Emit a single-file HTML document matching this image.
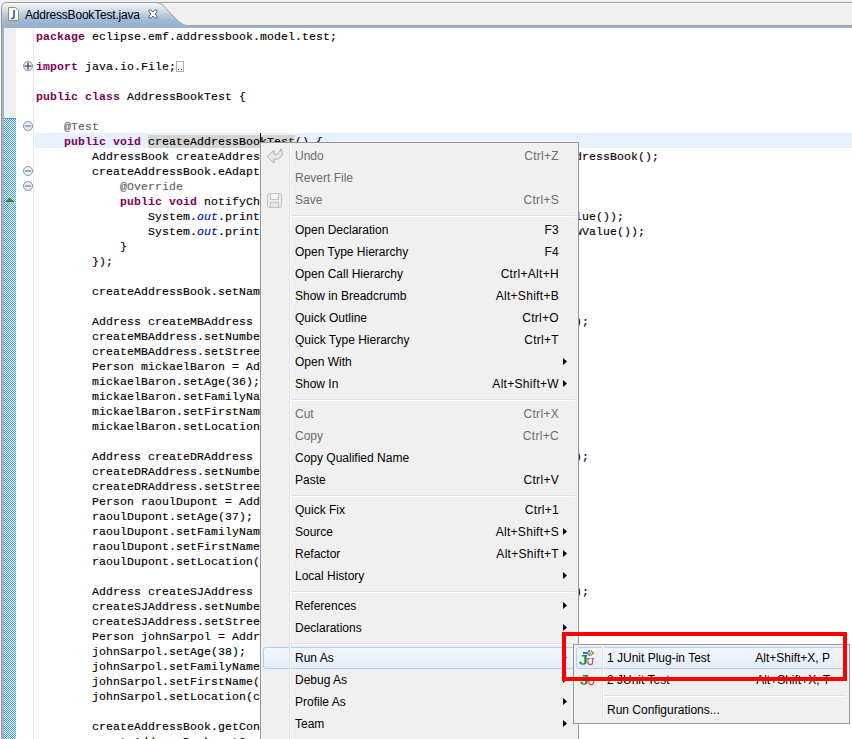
<!DOCTYPE html>
<html><head><meta charset="utf-8">
<style>
*{margin:0;padding:0;box-sizing:border-box}
html,body{width:852px;height:739px;overflow:hidden;background:#fff}
body{position:relative;font-family:"Liberation Sans",sans-serif}
#tabs{position:absolute;left:0;top:0;width:852px;height:28px;background:#f0f0f0}
#tabs svg{position:absolute;left:0;top:0}
#title{position:absolute;left:25px;top:6px;font-size:12px;line-height:18px;letter-spacing:-0.2px;color:#000}
#editor{position:absolute;left:0;top:28px;width:852px;height:711px;background:#fff}
#lborder{position:absolute;left:1px;top:0;width:1px;height:711px;background:#9a9a9a}
#lblue{position:absolute;left:2px;top:0;width:2px;height:711px;background:#99b4d1}
#ruler{position:absolute;left:4px;top:0;width:12px;height:711px;background:#f0f0f0}
#gline{position:absolute;left:33px;top:0;width:1px;height:711px;background:#e8e8e8}
#curline{position:absolute;left:35px;top:105px;width:817px;height:15px;background:#e8f2fe}
.ln{position:absolute;left:36px;height:15px;line-height:15px;padding-top:1px;white-space:pre;font-family:"Liberation Mono",monospace;font-size:11.5px;letter-spacing:0.1px;color:#000;-webkit-text-stroke:0.15px #000}
.ln .k{-webkit-text-stroke:0}
.ln .an{-webkit-text-stroke:0.15px #646464}
.ln .o{-webkit-text-stroke:0.15px #0000c0}
.k{font-weight:bold;color:#7f0055}
.an{color:#646464}
.o{font-style:italic;color:#0000c0}
.sel{background:#d4d4d4}
#menu{position:absolute;left:260px;top:142px;width:319px;height:620px;background:#f0f0f0;border:1px solid #979797;padding:2px 2px 2px 2px}
#menu .col{position:absolute;z-index:1;left:28px;top:2px;width:2px;height:100%;border-left:1px solid #e2e3e3;border-right:1px solid #fff}
.it{position:relative;height:22px;line-height:22px;font-size:12px;color:#000;white-space:nowrap}
.it .lb{position:absolute;left:32px;top:0}
.it .sc{position:absolute;right:17px;top:0;letter-spacing:0.3px}
.it .ar{position:absolute;left:300px;top:7px}
.dis{color:#6d6d6d}
.sep{position:relative;height:8px}
.sep:after{content:"";position:absolute;left:28px;right:1px;top:4px;height:0;border-top:1px solid #e0e0e0;border-bottom:1px solid #fff}
.hlbox{position:absolute;left:0;right:0;top:0;bottom:0;border:1px solid #aecff7;border-radius:3px;background:linear-gradient(#f2f6fc,#e4edf9)}
.it.hl .lb,.it.hl .sc,.it.hl .ar{z-index:1}
#sub{position:absolute;z-index:5;left:573px;top:644px;width:277px;height:80px;background:#f0f0f0;border:1px solid #979797;padding:2px}
#sub .col{position:absolute;z-index:1;left:28px;top:2px;width:2px;height:74px;border-left:1px solid #e2e3e3;border-right:1px solid #fff}
#sub .it .lb{left:31px}
#sub .it .sc{right:17px;letter-spacing:0}
#red{position:absolute;z-index:10;left:562px;top:632px;width:285px;height:49px;border:4px solid #ff0000}
.icon{position:absolute}
</style></head><body>
<div id="tabs">
<svg width="852" height="28" viewBox="0 0 852 28">
<defs><linearGradient id="tg" x1="0" y1="0" x2="0" y2="1">
<stop offset="0" stop-color="#f4f7fb"/><stop offset="0.15" stop-color="#e3ebf4"/><stop offset="0.45" stop-color="#bccde2"/><stop offset="0.7" stop-color="#9fb8d6"/><stop offset="1" stop-color="#95b0d0"/></linearGradient></defs>
<line x1="7" y1="2.5" x2="852" y2="2.5" stroke="#a0a0a0" stroke-width="1"/>
<line x1="7" y1="3.5" x2="852" y2="3.5" stroke="#fafafa" stroke-width="1"/>
<line x1="189" y1="25.5" x2="852" y2="25.5" stroke="#a0a0a0" stroke-width="1"/>
<rect x="2" y="26" width="850" height="2" fill="#97b2d2"/>
<path d="M2,28 L2,8 Q2,3 7,3 L155,3 C160,3 163,5 166,8.5 L176,19 C180,23.5 184,26 189,26 L852,26 L852,28 Z" fill="url(#tg)"/>
<path d="M1.5,28 L1.5,8 Q1.5,2.5 7,2.5 L155,2.5 C160,2.5 163,5 166,8.5 L176,19 C180,23.5 184,25.5 189,25.5" fill="none" stroke="#9a9a9a" stroke-width="1"/>
<line x1="7" y1="3.5" x2="155" y2="3.5" stroke="#f8fafc" stroke-width="1"/>
<!-- J file icon -->
<path d="M8.5,7.5 L15.5,7.5 L18.5,10.5 L18.5,20.5 L8.5,20.5 Z" fill="#fdfdfd" stroke="#a88a3c" stroke-width="1"/>
<path d="M14,10 L14,16.5 Q14,18.5 12,18.5 L11,18.5" fill="none" stroke="#2c5aa0" stroke-width="1.6"/>
<!-- close x -->
<path d="M149,10 L151,10 L153,12 L155,10 L157,10 L157,12 L155,14 L157,16 L157,18 L155,18 L153,16 L151,18 L149,18 L149,16 L151,14 L149,12 Z" fill="#fff" stroke="#6a6a6a" stroke-width="1"/>
</svg>
<div id="title">AddressBookTest.java</div>
</div>
<div id="editor">
<div id="lborder"></div><div id="lblue"></div><div id="ruler"></div>
<svg style="position:absolute;left:4px;top:90px" width="12" height="621">
<defs><pattern id="chk" width="2" height="2" patternUnits="userSpaceOnUse"><rect width="2" height="2" fill="#fff"/><rect x="0" y="0" width="1" height="1" fill="#3399ff"/><rect x="1" y="1" width="1" height="1" fill="#3399ff"/></pattern></defs>
<rect x="0" y="0" width="12" height="621" fill="url(#chk)" shape-rendering="crispEdges"/>
<rect x="0" y="0" width="12" height="1" fill="#3399ff"/>
<path d="M1,84 L6,79 L11,84 Z" fill="#fff" transform="translate(0,1)"/>
<path d="M2,84 L6,80 L10,84 Z" fill="#2e9a3a" stroke="#0f7a1f" stroke-width="0.8"/>
</svg>
<div id="gline"></div>
<div id="curline"></div>
</div>
<!-- fold icons -->
<svg style="position:absolute;left:22px;top:58px" width="12" height="140">
<g fill="#e4eef6" stroke="#8a97a6" stroke-width="1">
<circle cx="6" cy="8" r="4.5"/>
<circle cx="6" cy="68" r="4.5"/>
<circle cx="6" cy="113" r="4.5"/>
<circle cx="6" cy="128" r="4.5"/>
</g>
<g stroke="#2a3440" stroke-width="1.1">
<line x1="2.5" y1="8" x2="9.5" y2="8"/><line x1="6" y1="4.5" x2="6" y2="11.5"/>
</g>
<g stroke="#7c8794" stroke-width="1.3">
<line x1="3" y1="68" x2="9" y2="68"/>
<line x1="3" y1="113" x2="9" y2="113"/>
<line x1="3" y1="128" x2="9" y2="128"/>
</g>
</svg>
<div style="position:absolute;left:0;top:0">
<div class=ln style="top:28px"><b class=k>package</b> eclipse.emf.addressbook.model.test;</div>
<div class=ln style="top:43px"></div>
<div class=ln style="top:58px"><b class=k>import</b> java.io.File;</div>
<div class=ln style="top:73px"></div>
<div class=ln style="top:88px"><b class=k>public</b> <b class=k>class</b> AddressBookTest {</div>
<div class=ln style="top:103px"></div>
<div class=ln style="top:118px">    <span class=an>@Test</span></div>
<div class=ln style="top:133px">    <b class=k>public</b> <b class=k>void</b> <span class=sel>createAddressBookTest</span>() {</div>
<div class=ln style="top:148px">        AddressBook createAddressBook = AddressbookFactory.eINSTANCE.createAddressBook();</div>
<div class=ln style="top:163px">        createAddressBook.eAdapters().add(new AdapterImpl() {</div>
<div class=ln style="top:178px">            <span class=an>@Override</span></div>
<div class=ln style="top:193px">            <b class=k>public</b> <b class=k>void</b> notifyChanged(Notification notification) {</div>
<div class=ln style="top:208px">                System.<i class=o>out</i>.println("Old value(set): " + notification.getOldValue());</div>
<div class=ln style="top:223px">                System.<i class=o>out</i>.println("New value(before): " + notification.getNewValue());</div>
<div class=ln style="top:238px">            }</div>
<div class=ln style="top:253px">        });</div>
<div class=ln style="top:268px"></div>
<div class=ln style="top:283px">        createAddressBook.setName("Mon Carnet");</div>
<div class=ln style="top:298px"></div>
<div class=ln style="top:313px">        Address createMBAddress = AddressbookFactory.eINSTANCE.createAddress();</div>
<div class=ln style="top:328px">        createMBAddress.setNumber(10);</div>
<div class=ln style="top:343px">        createMBAddress.setStreet("Rue de Paris");</div>
<div class=ln style="top:358px">        Person mickaelBaron = AddressbookFactory.eINSTANCE.createPerson();</div>
<div class=ln style="top:373px">        mickaelBaron.setAge(36);</div>
<div class=ln style="top:388px">        mickaelBaron.setFamilyName("Baron");</div>
<div class=ln style="top:403px">        mickaelBaron.setFirstName("Mickael");</div>
<div class=ln style="top:418px">        mickaelBaron.setLocation(createMBAddress);</div>
<div class=ln style="top:433px"></div>
<div class=ln style="top:448px">        Address createDRAddress = AddressbookFactory.eINSTANCE.createAddress();</div>
<div class=ln style="top:463px">        createDRAddress.setNumber(20);</div>
<div class=ln style="top:478px">        createDRAddress.setStreet("Rue de Lyon");</div>
<div class=ln style="top:493px">        Person raoulDupont = AddressbookFactory.eINSTANCE.createPerson();</div>
<div class=ln style="top:508px">        raoulDupont.setAge(37);</div>
<div class=ln style="top:523px">        raoulDupont.setFamilyName("Dupont");</div>
<div class=ln style="top:538px">        raoulDupont.setFirstName("Raoul");</div>
<div class=ln style="top:553px">        raoulDupont.setLocation(createDRAddress);</div>
<div class=ln style="top:568px"></div>
<div class=ln style="top:583px">        Address createSJAddress = AddressbookFactory.eINSTANCE.createAddress();</div>
<div class=ln style="top:598px">        createSJAddress.setNumber(30);</div>
<div class=ln style="top:613px">        createSJAddress.setStreet("Rue de Nice");</div>
<div class=ln style="top:628px">        Person johnSarpol = AddressbookFactory.eINSTANCE.createPerson();</div>
<div class=ln style="top:643px">        johnSarpol.setAge(38);</div>
<div class=ln style="top:658px">        johnSarpol.setFamilyName("Sarpol");</div>
<div class=ln style="top:673px">        johnSarpol.setFirstName("John");</div>
<div class=ln style="top:688px">        johnSarpol.setLocation(createSJAddress);</div>
<div class=ln style="top:703px"></div>
<div class=ln style="top:718px">        createAddressBook.getContents().add(mickaelBaron);</div>
<div class=ln style="top:733px">        createAddressBook.getContents().add(raoulDupont);</div>
</div>
<!-- fold box after import -->
<div style="position:absolute;left:176px;top:61px;width:8px;height:11px;border:1px solid #b0b0b0;background:#fff"><div style="position:absolute;left:1px;top:7px;width:1px;height:1px;background:#555"></div><div style="position:absolute;left:4px;top:7px;width:1px;height:1px;background:#555"></div></div>
<!-- caret -->
<div style="position:absolute;left:260px;top:133px;width:1px;height:15px;background:#000"></div>

<div id="menu"><div class="col"></div>
<svg style="position:absolute;left:5px;top:5px" width="18" height="62">
<path d="M1,8.5 L8,2.5 L8,6.5 Q12,6.5 13.5,4 L15,1 Q17.5,5 15.5,8.5 Q13,11.5 8,11.5 L8,15 Z" fill="#e6e6e6" stroke="#b4b4b4" stroke-width="1" stroke-linejoin="round"/>
<rect x="1.5" y="45.5" width="14" height="14" rx="1.5" fill="#ececec" stroke="#c4c4c4"/>
<rect x="4.5" y="45.5" width="8" height="6" fill="#f4f4f4" stroke="#c4c4c4"/>
<rect x="4.5" y="54.5" width="8" height="5" fill="#e8e8e8" stroke="#c4c4c4"/>
</svg>
<div class="it dis"><span class=lb>Undo</span><span class=sc>Ctrl+Z</span></div>
<div class="it dis"><span class=lb>Revert File</span></div>
<div class="it dis"><span class=lb>Save</span><span class=sc>Ctrl+S</span></div>
<div class=sep></div>
<div class="it"><span class=lb>Open Declaration</span><span class=sc>F3</span></div>
<div class="it"><span class=lb>Open Type Hierarchy</span><span class=sc>F4</span></div>
<div class="it"><span class=lb>Open Call Hierarchy</span><span class=sc>Ctrl+Alt+H</span></div>
<div class="it"><span class=lb>Show in Breadcrumb</span><span class=sc>Alt+Shift+B</span></div>
<div class="it"><span class=lb>Quick Outline</span><span class=sc>Ctrl+O</span></div>
<div class="it"><span class=lb>Quick Type Hierarchy</span><span class=sc>Ctrl+T</span></div>
<div class="it"><span class=lb>Open With</span><svg class=ar width="5" height="8"><path d="M0,0 L4,3.5 L0,7 Z" fill="#000"/></svg></div>
<div class="it"><span class=lb>Show In</span><span class=sc>Alt+Shift+W</span><svg class=ar width="5" height="8"><path d="M0,0 L4,3.5 L0,7 Z" fill="#000"/></svg></div>
<div class=sep></div>
<div class="it dis"><span class=lb>Cut</span><span class=sc>Ctrl+X</span></div>
<div class="it dis"><span class=lb>Copy</span><span class=sc>Ctrl+C</span></div>
<div class="it"><span class=lb>Copy Qualified Name</span></div>
<div class="it"><span class=lb>Paste</span><span class=sc>Ctrl+V</span></div>
<div class=sep></div>
<div class="it"><span class=lb>Quick Fix</span><span class=sc>Ctrl+1</span></div>
<div class="it"><span class=lb>Source</span><span class=sc>Alt+Shift+S</span><svg class=ar width="5" height="8"><path d="M0,0 L4,3.5 L0,7 Z" fill="#000"/></svg></div>
<div class="it"><span class=lb>Refactor</span><span class=sc>Alt+Shift+T</span><svg class=ar width="5" height="8"><path d="M0,0 L4,3.5 L0,7 Z" fill="#000"/></svg></div>
<div class="it"><span class=lb>Local History</span><svg class=ar width="5" height="8"><path d="M0,0 L4,3.5 L0,7 Z" fill="#000"/></svg></div>
<div class=sep></div>
<div class="it"><span class=lb>References</span><svg class=ar width="5" height="8"><path d="M0,0 L4,3.5 L0,7 Z" fill="#000"/></svg></div>
<div class="it"><span class=lb>Declarations</span><svg class=ar width="5" height="8"><path d="M0,0 L4,3.5 L0,7 Z" fill="#000"/></svg></div>
<div class=sep></div>
<div class="it hl"><div class=hlbox></div><span class=lb>Run As</span><svg class=ar width="5" height="8"><path d="M0,0 L4,3.5 L0,7 Z" fill="#000"/></svg></div>
<div class="it"><span class=lb>Debug As</span><svg class=ar width="5" height="8"><path d="M0,0 L4,3.5 L0,7 Z" fill="#000"/></svg></div>
<div class="it"><span class=lb>Profile As</span><svg class=ar width="5" height="8"><path d="M0,0 L4,3.5 L0,7 Z" fill="#000"/></svg></div>
<div class="it"><span class=lb>Team</span><svg class=ar width="5" height="8"><path d="M0,0 L4,3.5 L0,7 Z" fill="#000"/></svg></div>
<div class="it"><span class=lb>Compare With</span><svg class=ar width="5" height="8"><path d="M0,0 L4,3.5 L0,7 Z" fill="#000"/></svg></div>
</div>

<div id="sub"><div class="col"></div>
<div class="it hl"><div class="hlbox"></div>
<svg style="position:absolute;left:3px;top:3px;z-index:1" width="18" height="18">
<g transform="translate(0,5)">
<path d="M2.8,0 L8.2,0 L8.2,1.4 L7.6,1.4 L7.6,7 Q7.6,9.8 4.2,9.8 Q0.6,9.8 0.4,7.6 Q0.4,6.6 1.5,6.6 Q2.5,6.6 2.5,7.6 Q2.6,8.6 4,8.6 Q5.3,8.6 5.3,7 L5.3,1.4 L2.8,1.4 Z" fill="#25874a"/>
<path d="M7.8,3.5 L11,3.5 M8.9,3.5 L8.9,7.6 Q8.9,9.6 11.2,9.6 Q13.6,9.6 13.6,7.6 L13.6,3.5 M12.5,3.5 L15,3.5" fill="none" stroke="#d9505a" stroke-width="1.2"/>
</g>
<rect x="4" y="2" width="4.5" height="2" fill="#3a6cc8"/>
<path d="M8,3 L10.5,0 L11.5,3 L10.5,6 Z" fill="#a8bedf" stroke="#3a6cc8" stroke-width="0.9"/>
<path d="M11.5,0.5 L14.5,3 L11.5,5.5" fill="#fff3c0" stroke="#c8860a" stroke-width="1.3"/>
</svg><span class="lb">1 JUnit Plug-in Test</span><span class="sc">Alt+Shift+X, P</span></div>
<div class="it">
<svg style="position:absolute;left:3px;top:3px" width="18" height="18">
<g transform="translate(1,3)">
<path d="M2.8,0 L8.2,0 L8.2,1.4 L7.6,1.4 L7.6,7 Q7.6,9.8 4.2,9.8 Q0.6,9.8 0.4,7.6 Q0.4,6.6 1.5,6.6 Q2.5,6.6 2.5,7.6 Q2.6,8.6 4,8.6 Q5.3,8.6 5.3,7 L5.3,1.4 L2.8,1.4 Z" fill="#25874a"/>
<path d="M7.8,3.5 L11,3.5 M8.9,3.5 L8.9,7.6 Q8.9,9.6 11.2,9.6 Q13.6,9.6 13.6,7.6 L13.6,3.5 M12.5,3.5 L15,3.5" fill="none" stroke="#d9505a" stroke-width="1.2"/>
</g>
</svg><span class="lb">2 JUnit Test</span><span class="sc">Alt+Shift+X, T</span></div>
<div class="sep"></div>
<div class="it"><span class="lb">Run Configurations...</span></div>
</div>
<div id="red"></div>
</body></html>
